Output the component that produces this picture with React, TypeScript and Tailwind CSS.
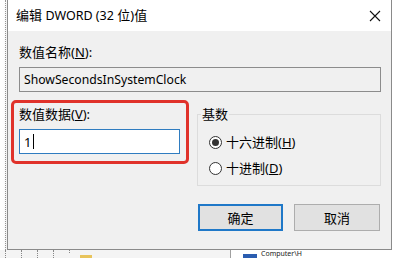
import React from "react";

const font = "font-['Noto_Sans','Noto_Sans_CJK_SC',sans-serif]";

function Radio({ checked }: { checked: boolean }) {
  return (
    <span className="w-[13px] h-[13px] rounded-full border border-[#333] bg-white flex items-center justify-center shrink-0">
      {checked && <span className="w-[7px] h-[7px] rounded-full bg-[#333]" />}
    </span>
  );
}

export default function App() {
  return (
    <div className={`w-[399px] h-[258px] overflow-hidden bg-white flex flex-col ${font} text-[13px] leading-[16px] text-black`}>
      <div className="flex h-[250px]">
        {/* left strip with dotted line */}
        <div className="w-[7px] h-full flex">
          <div className="ml-[5px] w-[1px] h-full border-l border-dotted border-[#9a9a9a]" />
        </div>
        {/* dialog */}
        <div className="w-[385px] h-full border-x border-b border-[#8a8a8a] bg-[#f0f0f0] flex flex-col shadow-[2px_2px_6px_rgba(0,0,0,0.25)]">
          <div className="h-[31px] bg-white flex items-center justify-between pl-[8px] pr-[10px] shrink-0">
            <span className="text-[13px]">
              编辑 <span className="text-[12.5px]">DWORD (32</span> 位)值
            </span>
            <svg width="12" height="12" viewBox="0 0 12 12">
              <path d="M1 1 L11 11 M11 1 L1 11" stroke="#111" strokeWidth="1.1" fill="none" />
            </svg>
          </div>
          <div className="flex flex-col pl-[11px] pr-[10px]">
            <div className="mt-[13px] h-[16px]">
              数值名称(<span className="underline">N</span>):
            </div>
            <div className="mt-[7px] h-[25px] border border-[#8c8c8c] bg-[#f0f0f0] flex items-center pl-[4px] text-[12.2px]">
              ShowSecondsInSystemClock
            </div>
            <div className="mt-[8px] flex items-start">
              <div className="-ml-[8px] w-[178px] h-[64px] border-[3px] border-[#e0322a] rounded-[5px] flex flex-col pt-[3px] pl-[5px]">
                <div className="h-[16px]">
                  数值数据(<span className="underline">V</span>):
                </div>
                <div className="mt-[7px] w-[161px] h-[25px] border border-[#2f7cc0] bg-white flex items-center pl-[4px]">
                  <span>1</span>
                  <span className="ml-[2px] w-[1px] h-[15px] bg-black" />
                </div>
              </div>
              <fieldset className="ml-[8px] mt-[6px] w-[184px] h-[80px] border border-[#dcdcdc] px-0 flex flex-col">
                <legend className="ml-[3px] px-[1px] leading-[16px]">基数</legend>
                <div className="mt-[12px] ml-[11px] flex items-center h-[16px] gap-[4px]">
                  <Radio checked />
                  <span>
                    十六进制(<span className="underline">H</span>)
                  </span>
                </div>
                <div className="mt-[10px] ml-[11px] flex items-center h-[16px] gap-[4px]">
                  <Radio checked={false} />
                  <span>
                    十进制(<span className="underline">D</span>)
                  </span>
                </div>
              </fieldset>
            </div>
            <div className="mt-[18px] flex justify-end gap-[11px] pr-[1px]">
              <div className="w-[85px] h-[27px] border-2 border-[#1f78c8] bg-[#e1e1e1] flex items-center justify-center">
                确定
              </div>
              <div className="w-[86px] h-[27px] border border-[#adadad] bg-[#e1e1e1] flex items-center justify-center">
                取消
              </div>
            </div>
          </div>
        </div>
        <div className="flex-1 bg-white" />
      </div>
      {/* background strip below dialog */}
      <div className="flex h-[8px]">
        <div className="w-[230px] h-full bg-[#f4f4f4] flex items-start">
          <div className="ml-[5px] w-[1px] h-full border-l border-dotted border-[#888]" />
          <div className="ml-[15px] w-[1px] h-full border-l border-dotted border-[#888]" />
          <div className="ml-[15px] w-[1px] h-full border-l border-dotted border-[#888]" />
          <div className="ml-[15px] w-[1px] h-full border-l border-dotted border-[#888]" />
          <div className="ml-[15px] w-[1px] h-[3px] border-l border-dotted border-[#888]" />
          <div className="ml-[10px] mt-[5px] w-[12px] h-[3px] bg-[#e8c45c]" />
        </div>
        <div className="w-[1px] h-full bg-[#a0a0a0]" />
        <div className="flex-1 bg-white flex items-start pl-[12px]">
          <div className="mt-[4px] w-[14px] h-[4px] bg-[#2a5db0]" />
          <span className="ml-[4px] text-[7px] leading-[8px] text-[#222]">Computer\H</span>
        </div>
      </div>
    </div>
  );
}
